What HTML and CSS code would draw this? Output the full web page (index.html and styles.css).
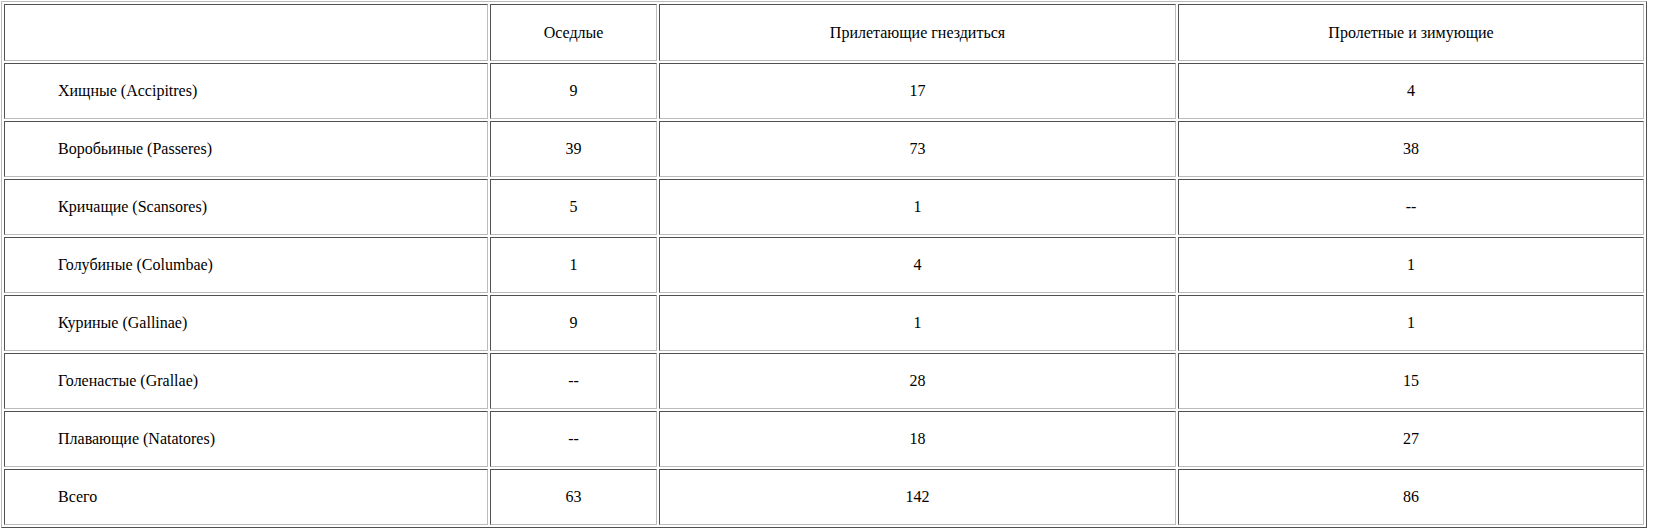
FILE: index.html
```html
<!DOCTYPE html>
<html>
<head>
<meta charset="utf-8">
<link rel="stylesheet" href="styles.css">
</head>
<body>
<table class="birds">
  <tr class="head">
    <td class="c1"></td>
    <td class="c2">Оседлые</td>
    <td class="c3">Прилетающие гнездиться</td>
    <td class="c4">Пролетные и зимующие</td>
  </tr>
  <tr><td class="name">Хищные (Accipitres)</td><td>9</td><td>17</td><td>4</td></tr>
  <tr><td class="name">Воробьиные (Passeres)</td><td>39</td><td>73</td><td>38</td></tr>
  <tr><td class="name">Кричащие (Scansores)</td><td>5</td><td>1</td><td>--</td></tr>
  <tr><td class="name">Голубиные (Columbae)</td><td>1</td><td>4</td><td>1</td></tr>
  <tr><td class="name">Куриные (Gallinae)</td><td>9</td><td>1</td><td>1</td></tr>
  <tr><td class="name">Голенастые (Grallae)</td><td>--</td><td>28</td><td>15</td></tr>
  <tr><td class="name">Плавающие (Natatores)</td><td>--</td><td>18</td><td>27</td></tr>
  <tr><td class="name">Всего</td><td>63</td><td>142</td><td>86</td></tr>
</table>
</body>
</html>
```
FILE: styles.css
```css
html, body {
  margin: 0;
  padding: 0;
  background: #ffffff;
}
body {
  padding: 1px;
  font-family: "Liberation Serif", "DejaVu Serif", serif;
  font-size: 16px;
  color: #000000;
}
.birds {
  width: 1646px;
  table-layout: fixed;
  border-collapse: separate;
  border-spacing: 2px;
  border-style: solid;
  border-width: 1px;
  border-color: #bcbcbc #505050 #505050 #bcbcbc;
}
.birds td {
  box-sizing: border-box;
  border-style: solid;
  border-width: 1px;
  border-color: #505050 #bcbcbc #bcbcbc #505050;
  padding: 0;
  text-align: center;
  vertical-align: middle;
  height: 56px;
  font-family: "Liberation Serif", "DejaVu Serif", serif;
  font-size: 16px;
}
.birds .head td {
  height: 57px;
}
.birds td.name {
  text-align: left;
  padding-left: 53px;
}
.c1 { width: 484px; }
.c2 { width: 167px; }
.c3 { width: 517px; }
.c4 { width: 466px; }
```
